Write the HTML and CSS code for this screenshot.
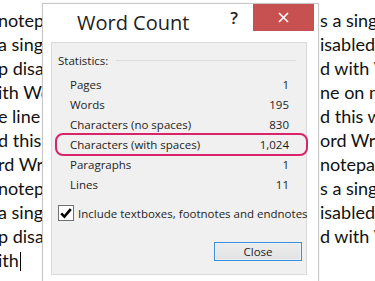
FILE: index.html
```html
<!DOCTYPE html>
<html lang="en">
<head>
<meta charset="utf-8">
<title>Word Count</title>
<link rel="stylesheet" href="styles.css">
</head>
<body>
<div class="doc">
  <div class="line"><span class="l">notepad</span><span class="r">s a single</span></div>
  <div class="line"><span class="l">a single</span><span class="r">isabled</span></div>
  <div class="line"><span class="l">p disabled</span><span class="r">d with Word</span></div>
  <div class="line"><span class="l">ith Word</span><span class="r">ne on my</span></div>
  <div class="line"><span class="l">e line on</span><span class="r">d this way</span></div>
  <div class="line"><span class="l">d this</span><span class="r">ord Wrap</span></div>
  <div class="line"><span class="l">rd Wrap</span><span class="r">notepad</span></div>
  <div class="line"><span class="l">notepad</span><span class="r">s a single</span></div>
  <div class="line"><span class="l">a single</span><span class="r">isabled</span></div>
  <div class="line"><span class="l">p disabled</span><span class="r">d with Word</span></div>
  <div class="line"><span class="l">ith<span class="caret"></span></span></div>
</div>

<div class="dialog">
  <div class="titlebar">
    <div class="title">Word Count</div>
    <div class="help">?</div>
    <div class="close-x">
      <svg width="11" height="11" viewBox="0 0 11 11"><path d="M1 1 L10 10 M10 1 L1 10" stroke="#fff" stroke-width="1.6"/></svg>
    </div>
  </div>
  <div class="panel">
    <div class="group-head">Statistics:</div>
    <div class="stats">
      <div class="row"><span>Pages</span><span>1</span></div>
      <div class="row"><span>Words</span><span>195</span></div>
      <div class="row"><span>Characters (no spaces)</span><span>830</span></div>
      <div class="row hl"><span>Characters (with spaces)</span><span>1,024</span></div>
      <div class="row"><span>Paragraphs</span><span>1</span></div>
      <div class="row"><span>Lines</span><span>11</span></div>
    </div>
    <div class="check">
      <span class="box">
        <svg width="14" height="14" viewBox="0 0 14 14"><path d="M2.2 7.4 L5.4 10.6 L11.8 3.2" fill="none" stroke="#000" stroke-width="2.6"/></svg>
      </span>
      <span class="check-label">Include textboxes, footnotes and endnotes</span>
    </div>
    <div class="actions"><button class="btn">Close</button></div>
  </div>
</div>
</body>
</html>
```
FILE: styles.css
```css
html, body {
  margin: 0;
  padding: 0;
  background: #fff;
  overflow: hidden;
  width: 375px;
  height: 281px;
}
body {
  position: relative;
  font-family: Lato, "Open Sans", sans-serif;
}
.doc {
  padding-top: 8px;
  font-size: 18px;
  line-height: 24px;
  color: #111;
}
.line {
  display: flex;
  white-space: nowrap;
  height: 24px;
}
.l {
  width: 46px;
  margin-left: -2px;
  flex: none;
  overflow: hidden;
}
.r {
  flex: none;
  margin-left: 276px;
}
.caret {
  display: inline-block;
  width: 1px;
  height: 19px;
  background: #000;
  vertical-align: -4px;
  margin-left: 1px;
}
.dialog {
  position: absolute;
  left: 42px;
  top: 3px;
  width: 275px;
  height: 300px;
  background: #fff;
  border: 1px solid #c6c6c6;
  box-shadow: 0 0 2px rgba(0,0,0,0.08);
  font-family: "Open Sans", sans-serif;
  color: #1e1e1e;
}
.titlebar {
  display: flex;
  align-items: flex-start;
  height: 38px;
}
.title {
  flex: 1;
  margin-left: 34px;
  margin-top: 5px;
  font-size: 20px;
  line-height: 28px;
  color: #222;
}
.help {
  font-size: 17px;
  font-weight: 600;
  line-height: 27px;
  margin-right: 15px;
  color: #222;
}
.close-x {
  width: 61px;
  height: 27px;
  margin-right: 4px;
  background: #c75050;
  display: flex;
  align-items: center;
  justify-content: center;
}
.panel {
  margin: 0 11px 0 8px;
  border: 1px solid #dadada;
  background: #f0f0f0;
  padding: 7px 4px 13px 6px;
  font-size: 11.5px;
  color: #1e1e1e;
}
.group-head {
  display: flex;
  align-items: center;
  height: 20px;
}
.group-head::after {
  content: "";
  flex: 1;
  border-top: 1px solid #dcdcdc;
  margin: 0 6px 0 8px;
}
.stats {
  margin: 5px 13px 0 12px;
}
.row {
  display: flex;
  justify-content: space-between;
  height: 20px;
  line-height: 20px;
}
.hl {
  position: relative;
}
.hl::after {
  content: "";
  position: absolute;
  left: -15px;
  right: -19px;
  top: -2px;
  bottom: -1px;
  border: 2px solid #d9246a;
  border-radius: 8px;
}
.check {
  display: flex;
  align-items: center;
  height: 20px;
  margin-top: 8px;
}
.box {
  width: 14px;
  height: 14px;
  border: 1px solid #707070;
  background: #fff;
  display: flex;
  align-items: center;
  justify-content: center;
  margin-right: 4px;
}
.check-label {
  white-space: nowrap;
}
.actions {
  display: flex;
  justify-content: flex-end;
  margin-top: 19px;
}
.btn {
  width: 88px;
  height: 19px;
  padding: 0;
  border: 1px solid #3c8fd8;
  box-shadow: inset 0 0 0 1px #e9f2fb;
  background: linear-gradient(#ececec, #e3e3e3);
  font-family: "Open Sans", sans-serif;
  font-size: 11.5px;
  color: #1e1e1e;
  line-height: 17px;
}
```
